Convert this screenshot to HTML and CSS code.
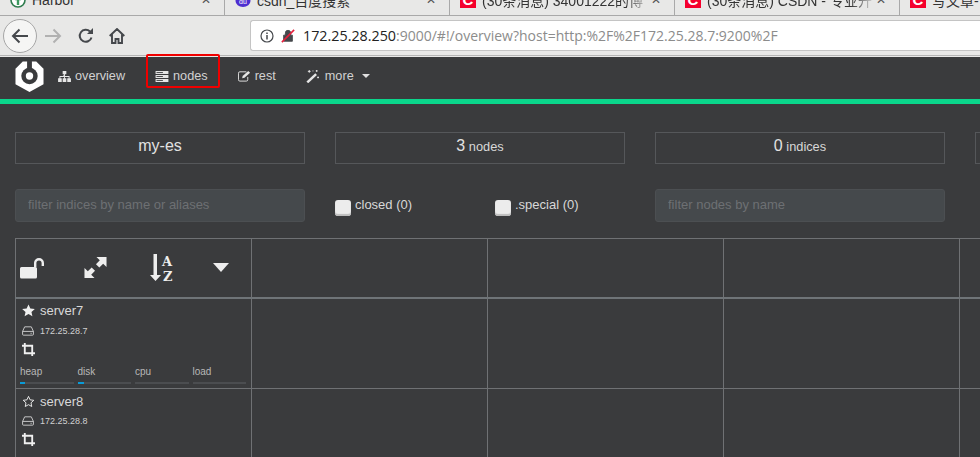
FILE: index.html
```html
<!DOCTYPE html>
<html lang="en">
<head>
  <meta charset="UTF-8" />
  <title>cerebro</title>
  <link rel="stylesheet" href="styles.css">
</head>
<body>
  <div class="browser">
    <div class="tabstrip">
      <div class="tab tab-first">
        <svg class="favicon" viewBox="0 0 16 16"><circle cx="8" cy="8" r="7" fill="#fff" stroke="#2f7d4f" stroke-width="1.6"/><path d="M8 3v10M5 7h6" stroke="#3c9a5f" stroke-width="2.4"/></svg>
        <span class="tab-title">Harbor</span><span class="tab-x">✕</span>
      </div>
      <div class="tab tab-second">
        <svg class="favicon" viewBox="0 0 16 16"><ellipse cx="8" cy="9" rx="7.5" ry="6" fill="#4e2ed0"/><text x="8" y="12" font-size="7" fill="#fff" text-anchor="middle" font-family="Liberation Sans">du</text></svg>
        <span class="tab-title">csdn_百度搜索</span><span class="tab-x">✕</span>
      </div>
      <div class="tab">
        <span class="csdn-icon">C</span>
        <span class="tab-title tab-fade">(30条消息) 34001222的博</span><span class="tab-x">✕</span>
      </div>
      <div class="tab">
        <span class="csdn-icon">C</span>
        <span class="tab-title tab-fade">(30条消息) CSDN - 专业开</span><span class="tab-x">✕</span>
      </div>
      <div class="tab">
        <span class="csdn-icon">C</span>
        <span class="tab-title">写文章-</span>
      </div>
    </div>
    <div class="toolbar">
      <div class="back-btn">
        <svg viewBox="0 0 18 16" width="18" height="16"><path d="M17 8H2M8.500 1.500L2 8l6.500 6.500" fill="none" stroke="#45484c" stroke-width="2"/></svg>
      </div>
      <svg class="tool-icon forward" viewBox="0 0 18 16" width="18" height="16"><path d="M1 8h15M9.500 1.500L16 8l-6.500 6.500" fill="none" stroke="#b1b1b1" stroke-width="2"/></svg>
      <svg class="tool-icon reload" viewBox="0 0 16 16" width="16" height="16"><path d="M13.500 9.500A6 6 0 1 1 12 3.500" fill="none" stroke="#45484c" stroke-width="2"/><path d="M9 6h6V0z" fill="#45484c"/></svg>
      <svg class="tool-icon home" viewBox="0 0 16 16" width="16" height="16"><path d="M.7 8L8 1l7.300 7M3 6.500V15h3.500v-4h3v4H13V6.500" fill="none" stroke="#45484c" stroke-width="1.900"/></svg>
      <div class="urlbar">
        <svg class="info" viewBox="0 0 14 14" width="14" height="14"><circle cx="7" cy="7" r="6" fill="none" stroke="#45484c" stroke-width="1.200"/><path d="M7 6v4.500M7 3.500v1.500" stroke="#45484c" stroke-width="1.500"/></svg>
        <svg class="insecure" viewBox="0 0 16 16" width="14" height="14"><path d="M3 7h10v7H3zM5 7V4.500a3 3 0 0 1 6 0V7" fill="#45484c" stroke="#45484c"/><path d="M1 15L15 1" stroke="#e5203c" stroke-width="1.800"/></svg>
        <span class="url"><span class="url-host">172.25.28.250</span>:9000/#!/overview?host=http:%2F%2F172.25.28.7:9200%2F</span>
      </div>
    </div>
  </div>

  <nav class="navbar">
    <svg class="logo" viewBox="0 0 30 32" width="29" height="31"><path d="M8 .5h14l7.500 7.500v16L15 32 .5 24V8z" fill="#fff"/><circle cx="15" cy="15.500" r="8.500" fill="#3a3b3d"/><path d="M12.500 0h5v9h-5z" fill="#3a3b3d"/><circle cx="15" cy="15.500" r="3.800" fill="#fff"/></svg>
    <a class="nav-item nav-overview">
      <svg viewBox="0 0 14 12" width="13" height="11"><path d="M5 0h4v3.500H5zM0 8h4v4H0zM5 8h4v4H5zM10 8h4v4h-4zM6.500 3.500h1V5.500H12.500V8h-1V6.500h-4V8h-1V6.500h-4V8h-1V5.500h4z" fill="#e6e6e6"/></svg>
      overview
    </a>
    <a class="nav-item nav-nodes">
      <svg viewBox="0 0 14 12" width="14" height="11"><path d="M0 0h14v3.300H0zM0 4.300h14v3.300H0zM0 8.600h14V12H0z" fill="#e6e6e6"/><path d="M1 1.700h7M1 6h7M1 10.300h7" stroke="#3a3b3d" stroke-width="1"/></svg>
      nodes
    </a>
    <a class="nav-item nav-rest">
      <svg viewBox="0 0 14 12" width="13" height="12"><path d="M9 1.500H2A1.500 1.500 0 0 0 .5 3v7A1.500 1.500 0 0 0 2 11.500h7a1.500 1.500 0 0 0 1.500-1.500V7" fill="none" stroke="#e6e6e6"/><path d="M4.500 8.500l.5-2.500 6-5.500 2 2-6 5.500z" fill="#e6e6e6"/></svg>
      rest
    </a>
    <a class="nav-item nav-more">
      <svg viewBox="0 0 14 14" width="13" height="13"><path d="M.5 12.500L10 3.500l1.800 1.800L2.300 14.300z" fill="#e6e6e6"/><path d="M2 1.500h3M3.500 0v3M11.500 0v2M10.500 1h2M12 8h2M13 7v2M7 1h1" stroke="#e6e6e6"/></svg>
      more<span class="caret-small"></span>
    </a>
    <span class="annotation"></span>
  </nav>
  <div class="accent-bar"></div>

  <main class="content">
    <div class="stats">
      <div class="stat stat-name">my-es</div>
      <div class="stat"><b>3</b> nodes</div>
      <div class="stat"><b>0</b> indices</div>
      <div class="stat"></div>
    </div>

    <div class="filters">
      <input class="filter-input" type="text" placeholder="filter indices by name or aliases">
      <div class="checks">
        <label class="check check-closed"><span class="checkbox"></span>closed (0)</label>
        <label class="check"><span class="checkbox"></span>.special (0)</label>
      </div>
      <input class="filter-input" type="text" placeholder="filter nodes by name">
    </div>

    <table class="overview-table">
      <tr class="head-row">
        <th>
          <div class="head-icons">
            <svg viewBox="0 0 24 22" width="24" height="22"><path d="M1.500 10h14a1.500 1.500 0 0 1 1.500 1.500V20a1.500 1.500 0 0 1-1.500 1.500h-14A1.500 1.500 0 0 1 0 20v-8.500A1.500 1.500 0 0 1 1.500 10zM14 10V6a5 5 0 0 1 10 0v3h-2.400V6a2.600 2.600 0 0 0-5.200 0v4z" fill="#eeeeee"/></svg>
            <svg viewBox="0 0 24 24" width="23" height="23"><path d="M13 1h10.500v10.500L20 8l-4 4-3.500-3.500 4-4zM11 23H.5V12.500L4 16l4-4 3.500 3.500-4 4z" fill="#eeeeee"/></svg>
            <svg viewBox="0 0 24 28" width="24" height="28"><path d="M3.500 0h3.500v21h4l-5.500 6L0 21h3.500z" fill="#eeeeee"/><text x="12" y="12" font-family="DejaVu Serif" font-size="13" font-weight="700" fill="#eeeeee">A</text><text x="13" y="27" font-family="DejaVu Serif" font-size="13" font-weight="700" fill="#eeeeee">Z</text></svg>
            <svg viewBox="0 0 16 9" width="16" height="9"><path d="M0 0h16L8 9z" fill="#eeeeee"/></svg>
          </div>
        </th>
        <td></td><td></td><td></td><td></td>
      </tr>
      <tr class="node-row">
        <td>
          <div class="node-name">
            <svg viewBox="0 0 14 14" width="13" height="13"><path d="M7 .5l2 4.400 4.800.5-3.600 3.200 1 4.700L7 10.900l-4.200 2.400 1-4.700L.2 5.400 5 4.900z" fill="#f0f0f0"/></svg>
            server7
          </div>
          <div class="node-ip">
            <svg viewBox="0 0 14 12" width="12" height="10"><path d="M3 1h8l2.500 5.500V10a1 1 0 0 1-1 1h-11a1 1 0 0 1-1-1V6.500zM.5 6.500h13M10 8.700h1.500" fill="none" stroke="#e0e0e0"/></svg>
            172.25.28.7
          </div>
          <svg class="crop" viewBox="0 0 14 14" width="13" height="13"><path d="M3 0v11h11M0 3h11v11" fill="none" stroke="#f0f0f0" stroke-width="2"/></svg>
          <div class="metrics">
            <div class="metric"><span>heap</span><i class="meter"><i class="meter-fill" style="width: 10%"></i></i></div>
            <div class="metric"><span>disk</span><i class="meter"><i class="meter-fill" style="width: 13%"></i></i></div>
            <div class="metric"><span>cpu</span><i class="meter"></i></div>
            <div class="metric"><span>load</span><i class="meter"></i></div>
          </div>
        </td>
        <td></td><td></td><td></td><td></td>
      </tr>
      <tr class="node-row">
        <td>
          <div class="node-name">
            <svg viewBox="0 0 14 14" width="13" height="13"><path d="M7 1.500l1.700 3.700 4 .5-3 2.700.8 4L7 10.400l-3.500 2 .8-4-3-2.700 4-.5z" fill="none" stroke="#f0f0f0"/></svg>
            server8
          </div>
          <div class="node-ip">
            <svg viewBox="0 0 14 12" width="12" height="10"><path d="M3 1h8l2.500 5.500V10a1 1 0 0 1-1 1h-11a1 1 0 0 1-1-1V6.500zM.5 6.500h13M10 8.700h1.500" fill="none" stroke="#e0e0e0"/></svg>
            172.25.28.8
          </div>
          <svg class="crop" viewBox="0 0 14 14" width="13" height="13"><path d="M3 0v11h11M0 3h11v11" fill="none" stroke="#f0f0f0" stroke-width="2"/></svg>
        </td>
        <td></td><td></td><td></td><td></td>
      </tr>
    </table>
  </main>
</body>
</html>
```

FILE: styles.css
```css
html, body {
  margin: 0;
  padding: 0;
  height: 457px;
  overflow: hidden;
}

body {
  font-family: 'Liberation Sans', sans-serif;
  background-color: #3a3b3d;
  color: #d8d8d8;
}

/* browser chrome */
.browser {
  background: #e8e8e7;
  height: 57px;
}

.tabstrip {
  display: flex;
  height: 15px;
  overflow: hidden;
  border-bottom: 1px solid #a9a9a9;
}

.tab {
  display: flex;
  align-items: center;
  flex: none;
  width: 225px;
  height: 15px;
  padding-left: 10px;
  box-sizing: border-box;
  border-right: 1px solid #a9a9a9;
  font-family: 'Liberation Sans', 'Noto Sans CJK SC', sans-serif;
  font-size: 14px;
  color: #333;
}

.tab:last-child {
  border-right: 0;
}

.tab-title {
  margin-left: 6px;
  flex: 1;
  white-space: nowrap;
  overflow: hidden;
  transform: translateY(-8px);
}

.tab-fade {
  mask-image: linear-gradient(to right, #000 85%, transparent);
}

.tab-x {
  width: 23px;
  font-size: 12px;
  color: #555;
  transform: translateY(-8px);
}

.favicon {
  flex: none;
  width: 16px;
  height: 16px;
  transform: translateY(-8px);
}

.csdn-icon {
  flex: none;
  width: 16px;
  height: 16px;
  background: #f5002d;
  color: #fff;
  font-weight: 700;
  font-size: 15px;
  line-height: 15px;
  text-align: center;
  transform: translateY(-8px);
}

.toolbar {
  display: flex;
  align-items: center;
  height: 40px;
  padding-left: 3px;
  box-sizing: border-box;
  border-bottom: 1px solid #b5b5b5;
}

.back-btn {
  display: flex;
  align-items: center;
  justify-content: center;
  width: 32px;
  height: 32px;
  border: 1px solid #a6a6a6;
  border-radius: 50%;
  background: #f5f5f4;
}

.tool-icon {
  flex: none;
}

.forward {
  margin-left: 7px;
}

.reload {
  margin-left: 16px;
}

.home {
  margin-left: 15px;
}

.urlbar {
  display: flex;
  align-items: center;
  flex: 1;
  height: 29px;
  margin-left: 125px;
  padding-left: 9px;
  background: #fff;
  border: 1px solid #c4c4c4;
  border-right: 0;
  border-radius: 3px 0 0 3px;
}

.insecure {
  margin-left: 7px;
}

.url {
  margin-left: 8px;
  font-family: 'Open Sans', sans-serif;
  font-size: 14px;
  color: #8c8c8c;
  white-space: nowrap;
}

.url-host {
  font-size: 14.3px;
  color: #222;
}

/* app nav */
.navbar {
  display: flex;
  align-items: center;
  height: 42px;
  box-sizing: border-box;
  padding-bottom: 4px;
  background: #3a3b3d;
  position: relative;
  font-size: 12.7px;
  color: #d2d2d2;
}

.logo {
  flex: none;
  margin-left: 15px;
}

.nav-item {
  display: flex;
  align-items: center;
  gap: 4px;
}

.nav-overview {
  margin-left: 14px;
}

.nav-nodes {
  margin-left: 30px;
}

.nav-rest {
  margin-left: 30px;
}

.nav-more {
  margin-left: 30px;
  gap: 6px;
}

.caret-small {
  width: 0;
  height: 0;
  margin-left: 2px;
  border-left: 4.500px solid transparent;
  border-right: 4.500px solid transparent;
  border-top: 4px solid #e0e0e0;
}

.annotation {
  position: absolute;
  left: 146px;
  top: -3px;
  width: 70px;
  height: 30px;
  border: 2px solid #f00000;
  border-radius: 2px;
}

.accent-bar {
  height: 5px;
  background: #0bd68c;
}

/* overview */
.content {
  padding: 28px 0 0 15px;
}

.stats {
  display: flex;
  gap: 30px;
}

.stat {
  flex: none;
  width: 290px;
  height: 32px;
  box-sizing: border-box;
  border: 1px solid #55575a;
  font-size: 12.8px;
  line-height: 26px;
  text-align: center;
}

.stat b {
  font-size: 16px;
  font-weight: 400;
  color: #e2e2e2;
}

.stat-name {
  font-size: 16px;
  color: #e2e2e2;
}

.filters {
  display: flex;
  align-items: flex-start;
  margin-top: 25px;
}

.filter-input {
  flex: none;
  width: 290px;
  height: 33px;
  box-sizing: border-box;
  padding: 0 12px 2px;
  background: #45494c;
  border: 1px solid #4c4f52;
  border-radius: 3px;
  font-family: 'Liberation Sans', sans-serif;
  font-size: 13px;
  color: #d8d8d8;
}

.filter-input::placeholder {
  color: #6d7073;
  opacity: 1;
}

.checks {
  display: flex;
  width: 320px;
  margin-left: 30px;
  padding-top: 8px;
  font-size: 13px;
  color: #d8d8d8;
}

.check {
  display: flex;
  align-items: flex-start;
  gap: 4px;
}

.check-closed {
  width: 160px;
}

.checkbox {
  flex: none;
  width: 16px;
  height: 16px;
  margin-top: 3px;
  background: #ececec;
  border-radius: 3px;
  box-shadow: inset 0 -2px 1px #bdbdbd;
}

.overview-table {
  margin-top: 16px;
  border-collapse: collapse;
  table-layout: fixed;
  width: 1180px;
}

.overview-table th,
.overview-table td {
  width: 236px;
  padding: 0;
  border: 1px solid #6f7174;
  vertical-align: top;
  box-sizing: border-box;
}

.head-row {
  height: 59px;
}

.head-row th,
.head-row td {
  border-bottom: 2px solid #6f7478;
}

.head-icons {
  display: flex;
  align-items: center;
  height: 57px;
  padding-left: 4px;
}

.head-icons svg:nth-child(2) {
  margin-left: 40px;
}

.head-icons svg:nth-child(3) {
  margin-left: 43px;
}

.head-icons svg:nth-child(4) {
  margin-left: 39px;
}

.node-row {
  height: 91px;
}

.node-name {
  display: flex;
  align-items: center;
  gap: 5px;
  height: 24px;
  padding-left: 6px;
  font-size: 13px;
  color: #d8d8d8;
}

.node-ip {
  display: flex;
  align-items: center;
  gap: 6px;
  height: 16px;
  padding-left: 6px;
  font-size: 9px;
  color: #d0d0d0;
}

.crop {
  display: block;
  margin: 4px 0 0 6px;
}

.metrics {
  display: flex;
  gap: 4px;
  margin-top: 10px;
  padding-left: 4px;
  font-size: 10px;
  color: #b8b8b8;
}

.metric {
  display: flex;
  flex-direction: column;
  gap: 5px;
  width: 53.5px;
}

.meter {
  display: block;
  height: 2px;
  background: #4b4d50;
}

.meter-fill {
  display: block;
  height: 2px;
  background: #0a9bd8;
}
```
